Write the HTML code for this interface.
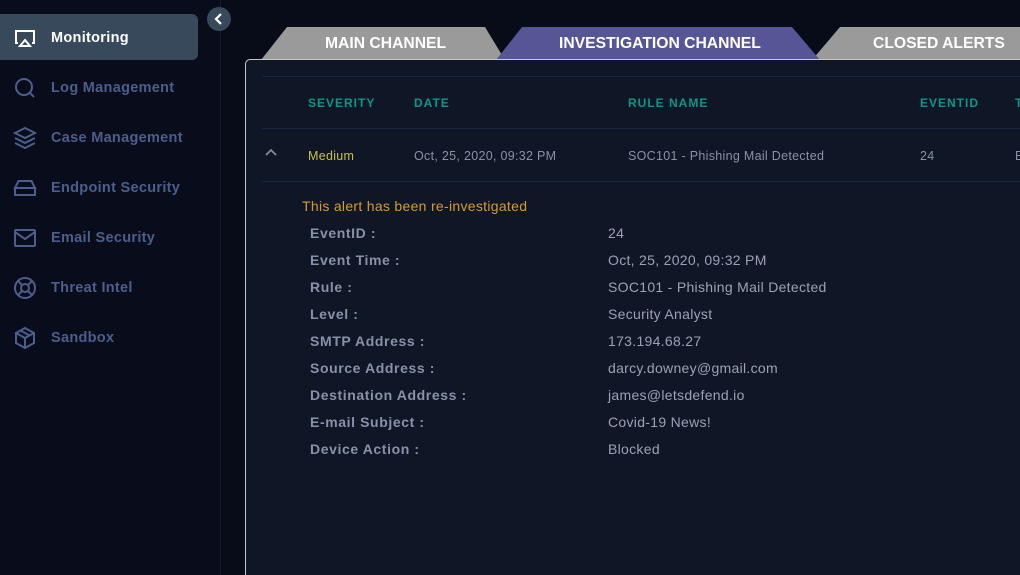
<!DOCTYPE html>
<html><head><meta charset="utf-8"><style>
*{margin:0;padding:0;box-sizing:border-box}
html,body{width:1020px;height:575px;overflow:hidden}
body{background:#080b18;font-family:"Liberation Sans",sans-serif;position:relative}
.side{position:absolute;left:0;top:0;width:221px;height:575px;background:#090c1a;border-right:1px solid #161b2c}
.item{position:absolute;left:0;width:198px;height:46px;font-weight:bold;font-size:14.5px;letter-spacing:.3px;color:#4b5e8c}
.item svg{position:absolute;left:13px;top:12px}
.item span{position:absolute;left:51px;top:16px;line-height:17px}
.item.act{background:#37495a;border-radius:0 6px 6px 0;color:#fff}
.btn{position:absolute;left:207px;top:7px;width:24px;height:24px;border-radius:50%;background:#37495a}
.panel{position:absolute;left:245px;top:59px;width:800px;height:530px;background:#0f1727;border:1px solid #c8c8c8;border-radius:5px}
.tab{position:absolute;top:33px;height:22px;line-height:22px;font-weight:bold;font-size:16px;color:#fff;white-space:nowrap;transform:scaleX(.98);transform-origin:left center}
.line{position:absolute;left:262px;right:0;height:1px;background:#1b2442}
.th{position:absolute;top:96px;font-weight:bold;font-size:12px;letter-spacing:1px;color:#0f9686}
.td{position:absolute;top:149px;font-size:12.5px;color:#8a90a6;letter-spacing:.3px}
.lab{position:absolute;left:310px;font-weight:bold;font-size:14px;color:#8a90a8;letter-spacing:.6px}
.val{position:absolute;left:608px;font-size:14px;color:#9ca1b5;letter-spacing:.3px}
</style></head><body>
<div class="side">
<div class="item act" style="top:14px"><svg width="24" height="24" viewBox="0 0 24 24" fill="none" stroke="#fff" stroke-width="2"><path d="M5 17H3V5h18v12h-2"/><path d="M12 14l5 6H7z"/></svg><span>Monitoring</span></div>
<div class="item" style="top:64px"><svg width="24" height="24" viewBox="0 0 24 24" fill="none" stroke="#4b5e8c" stroke-width="2"><circle cx="11" cy="11" r="8"/><path d="M21 21l-4.3-4.3"/></svg><span>Log Management</span></div>
<div class="item" style="top:114px"><svg width="24" height="24" viewBox="0 0 24 24" fill="none" stroke="#4b5e8c" stroke-width="2"><path d="M12 2L2 7l10 5 10-5z"/><path d="M2 12l10 5 10-5"/><path d="M2 17l10 5 10-5"/></svg><span>Case Management</span></div>
<div class="item" style="top:164px"><svg width="24" height="24" viewBox="0 0 24 24" fill="none" stroke="#4b5e8c" stroke-width="2"><path d="M2 12h20v7H2z"/><path d="M5.5 5h13L22 12H2z"/><path d="M6 16h.01M10 16h.01"/></svg><span>Endpoint Security</span></div>
<div class="item" style="top:214px"><svg width="24" height="24" viewBox="0 0 24 24" fill="none" stroke="#4b5e8c" stroke-width="2"><rect x="2" y="4" width="20" height="16" rx="1"/><path d="M2 6l10 7 10-7"/></svg><span>Email Security</span></div>
<div class="item" style="top:264px"><svg width="24" height="24" viewBox="0 0 24 24" fill="none" stroke="#4b5e8c" stroke-width="2"><circle cx="12" cy="12" r="10"/><circle cx="12" cy="12" r="4"/><path d="M5 5l4 4M15 15l4 4M19 5l-4 4M9 15l-4 4"/></svg><span>Threat Intel</span></div>
<div class="item" style="top:314px"><svg width="24" height="24" viewBox="0 0 24 24" fill="none" stroke="#4b5e8c" stroke-width="2"><path d="M12 2l9 5v10l-9 5-9-5V7z"/><path d="M3 7l9 5 9-5M12 12v10M7.5 4.5l9 5"/></svg><span>Sandbox</span></div>
</div>
<div class="btn"><svg width="24" height="24" viewBox="0 0 24 24" fill="none" stroke="#fff" stroke-width="2.2"><path d="M14 7l-5 5 5 5"/></svg></div>
<svg style="position:absolute;left:0;top:0" width="1020" height="60"><polygon points="261,60 287,27 485,27 505,60" fill="#9a9a9a"/><polygon points="812,60 840,27 1020,27 1020,60" fill="#9a9a9a"/><polygon points="496,60 522,27 792,27 820,60" fill="#565696"/></svg>
<div class="panel"></div>
<div class="tab" style="left:325px">MAIN CHANNEL</div>
<div class="tab" style="left:559px">INVESTIGATION CHANNEL</div>
<div class="tab" style="left:873px">CLOSED ALERTS</div>
<div class="line" style="top:76px"></div>
<div class="line" style="top:128px"></div>
<div class="line" style="top:181px"></div>
<div class="th" style="left:308px">SEVERITY</div>
<div class="th" style="left:414px">DATE</div>
<div class="th" style="left:628px">RULE NAME</div>
<div class="th" style="left:920px">EVENTID</div>
<div class="th" style="left:1015px">T</div>
<svg style="position:absolute;left:265px;top:148px" width="12" height="10" fill="none" stroke="#8a90a6" stroke-width="1.6"><path d="M1 7l5-5 5 5"/></svg>
<div class="td" style="left:308px;color:#c8c23a">Medium</div>
<div class="td" style="left:414px">Oct, 25, 2020, 09:32 PM</div>
<div class="td" style="left:628px">SOC101 - Phishing Mail Detected</div>
<div class="td" style="left:920px">24</div>
<div class="td" style="left:1015px">E</div>
<div style="position:absolute;left:302px;top:198px;font-size:14px;color:#d99a2b;letter-spacing:.3px">This alert has been re-investigated</div>
<div class="lab" style="top:225px">EventID :</div><div class="val" style="top:225px">24</div>
<div class="lab" style="top:252px">Event Time :</div><div class="val" style="top:252px">Oct, 25, 2020, 09:32 PM</div>
<div class="lab" style="top:279px">Rule :</div><div class="val" style="top:279px">SOC101 - Phishing Mail Detected</div>
<div class="lab" style="top:306px">Level :</div><div class="val" style="top:306px">Security Analyst</div>
<div class="lab" style="top:333px">SMTP Address :</div><div class="val" style="top:333px">173.194.68.27</div>
<div class="lab" style="top:360px">Source Address :</div><div class="val" style="top:360px">darcy.downey@gmail.com</div>
<div class="lab" style="top:387px">Destination Address :</div><div class="val" style="top:387px">james@letsdefend.io</div>
<div class="lab" style="top:414px">E-mail Subject :</div><div class="val" style="top:414px">Covid-19 News!</div>
<div class="lab" style="top:441px">Device Action :</div><div class="val" style="top:441px">Blocked</div>
</body></html>
